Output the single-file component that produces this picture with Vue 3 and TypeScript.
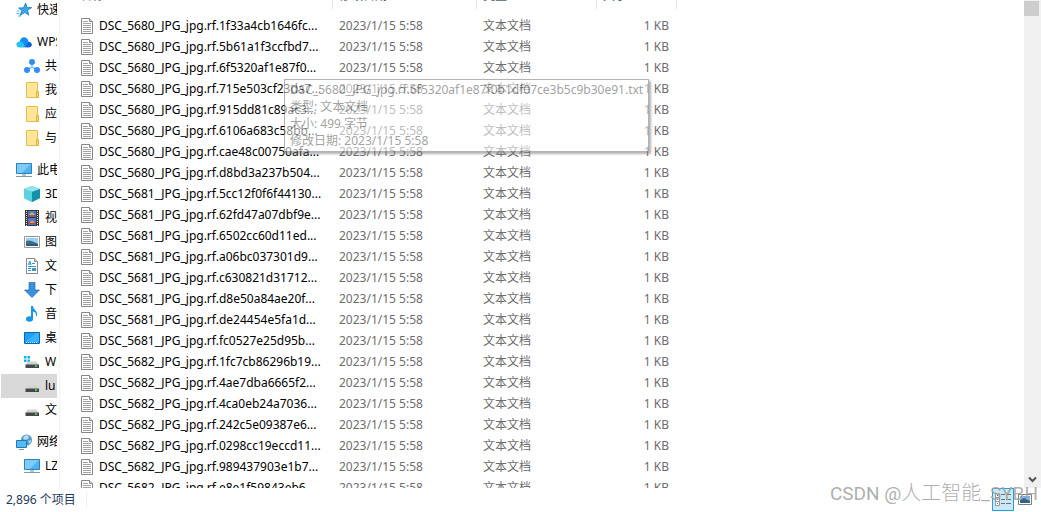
<script setup lang="ts">
type IconName =
  | 'star' | 'cloud' | 'share' | 'folder' | 'pc' | 'cube' | 'film' | 'photo' | 'doc'
  | 'down' | 'music' | 'desktop' | 'windrive' | 'drive' | 'network' | 'monitor'

interface NavItem {
  label: string
  icon: IconName
  child?: boolean
  selected?: boolean
}

const groups: NavItem[][] = [
  [{ label: '快速访问', icon: 'star' }],
  [
    { label: 'WPS云盘', icon: 'cloud' },
    { label: '共享', icon: 'share', child: true },
    { label: '我的', icon: 'folder', child: true },
    { label: '应用', icon: 'folder', child: true },
    { label: '与我', icon: 'folder', child: true },
  ],
  [
    { label: '此电脑', icon: 'pc' },
    { label: '3D 对象', icon: 'cube', child: true },
    { label: '视频', icon: 'film', child: true },
    { label: '图片', icon: 'photo', child: true },
    { label: '文档', icon: 'doc', child: true },
    { label: '下载', icon: 'down', child: true },
    { label: '音乐', icon: 'music', child: true },
    { label: '桌面', icon: 'desktop', child: true },
    { label: 'Windows', icon: 'windrive', child: true },
    { label: 'lu', icon: 'drive', child: true, selected: true },
    { label: '文件', icon: 'drive', child: true },
  ],
  [
    { label: '网络', icon: 'network' },
    { label: 'LZ', icon: 'monitor', child: true },
  ],
]

const files: string[] = [
  'DSC_5680_JPG_jpg.rf.1f33a4cb1646fc...',
  'DSC_5680_JPG_jpg.rf.5b61a1f3ccfbd7...',
  'DSC_5680_JPG_jpg.rf.6f5320af1e87f0...',
  'DSC_5680_JPG_jpg.rf.715e503cf23da7...',
  'DSC_5680_JPG_jpg.rf.915dd81c89ac3...',
  'DSC_5680_JPG_jpg.rf.6106a683c58bb...',
  'DSC_5680_JPG_jpg.rf.cae48c00750afa...',
  'DSC_5680_JPG_jpg.rf.d8bd3a237b504...',
  'DSC_5681_JPG_jpg.rf.5cc12f0f6f44130...',
  'DSC_5681_JPG_jpg.rf.62fd47a07dbf9e...',
  'DSC_5681_JPG_jpg.rf.6502cc60d11ed...',
  'DSC_5681_JPG_jpg.rf.a06bc037301d9...',
  'DSC_5681_JPG_jpg.rf.c630821d31712...',
  'DSC_5681_JPG_jpg.rf.d8e50a84ae20f...',
  'DSC_5681_JPG_jpg.rf.de24454e5fa1d...',
  'DSC_5681_JPG_jpg.rf.fc0527e25d95b...',
  'DSC_5682_JPG_jpg.rf.1fc7cb86296b19...',
  'DSC_5682_JPG_jpg.rf.4ae7dba6665f2...',
  'DSC_5682_JPG_jpg.rf.4ca0eb24a7036...',
  'DSC_5682_JPG_jpg.rf.242c5e09387e6...',
  'DSC_5682_JPG_jpg.rf.0298cc19eccd11...',
  'DSC_5682_JPG_jpg.rf.989437903e1b7...',
  'DSC_5682_JPG_jpg.rf.e8e1f59843eb6...',
]
</script>

<template>
  <div class="explorer">
    <div class="body">
      <nav class="sidebar">
        <ul v-for="(group, g) in groups" :key="g" class="group">
          <li v-for="item in group" :key="item.label">
            <a href="#" class="nav" :class="{ child: item.child, selected: item.selected }">
              <svg class="icon" viewBox="0 0 16 16" aria-hidden="true">
                <g v-if="item.icon === 'star'">
                  <path d="M9.700 1l1.200 4.400 4.800.2-4 2.700 1 4.900-3.800-2.800-5 3.200 1.900-5L2.500 6l4.900-.2z" fill="#3aa5ea" stroke="#1b7fc4" stroke-width=".8" />
                  <path d="M.5 9h3M.5 11.500h3M2 14h3" stroke="#5cb4ee" />
                </g>
                <g v-else-if="item.icon === 'cloud'">
                  <path d="M3.500 13.300C0 13.300.2 8.400 3.600 8 4.200 4.300 7 2.500 9.300 3.500c2 .8 3 2.500 3.300 4.200 4 .6 4.100 5.600.3 5.600z" fill="#168cf5" />
                  <path d="M4.500 13.300C-1 13.300-.8 7.800 3.600 7.500c3-.2 5.500 3 4.500 5.800z" fill="#27c4ee" />
                  <path d="M8 13.300c3 0 2.500-5.600 6-5.100 2.800 1.400 2 5.100-1.400 5.100z" fill="#1262dc" />
                </g>
                <g v-else-if="item.icon === 'share'">
                  <path d="M8 4v5L3 12M8 9l5 3" stroke="#8cc4ff" stroke-width="1.500" fill="none" />
                  <circle cx="8" cy="4" r="3" fill="#2f8ef5" />
                  <circle cx="3" cy="12" r="3" fill="#2f8ef5" />
                  <circle cx="13" cy="12" r="3" fill="#2f8ef5" />
                </g>
                <g v-else-if="item.icon === 'folder'">
                  <path d="M2.500.5h11v15h-11z" fill="#ffe596" stroke="#e5bd4c" />
                  <path d="M12.500 9.500h2v6h-2z" fill="#fbd66c" stroke="#dfb13c" />
                </g>
                <g v-else-if="item.icon === 'pc' || item.icon === 'monitor'">
                  <path d="M.5 1.500h15v10H.5z" fill="#4db3f5" stroke="#2b82bb" />
                  <path d="M1 2h14L6 11H1z" fill="#7ccbfa" />
                  <path d="M6 12h4v2H6z" fill="#b5c8d4" />
                  <path d="M0 14.500h16" stroke="#7d9cb0" />
                </g>
                <g v-else-if="item.icon === 'cube'">
                  <path d="M8 0l8 3v9l-8 4-8-4V3z" fill="#33b6cc" />
                  <path d="M8 0l8 3-8 3-8-3z" fill="#92e5ef" />
                  <path d="M8 6l8-3v9l-8 4z" fill="#1590a9" />
                  <path d="M0 3l8 3v10l-8-4z" fill="#5bd2e0" />
                </g>
                <g v-else-if="item.icon === 'film'">
                  <path d="M1 0h14v16H1z" fill="#37383b" />
                  <path d="M4 1h8v6H4zM4 8h8v7H4z" fill="#4a77d0" />
                  <path d="M5 5l3-3 3 3z" fill="#e8b32c" />
                  <path d="M5 14l3-4 4 4z" fill="#e6a02a" />
                  <path d="M4 6h8M4 13.500h8" stroke="#c23b42" />
                  <path d="M2.500 1v15M13.500 1v15" stroke="#e4e4e4" stroke-dasharray="1 1" />
                </g>
                <g v-else-if="item.icon === 'photo'">
                  <path d="M.5 2.500h15v11H.5z" fill="#fff" stroke="#979797" />
                  <path d="M2 4h12v8H2z" fill="#9bd0f2" />
                  <path d="M2 7q4-2 12 3v2H2z" fill="#416d82" />
                  <path d="M2 10h12v2H2z" fill="#2d5689" />
                </g>
                <g v-else-if="item.icon === 'doc'">
                  <path d="M2.500.5h8l3 3v12h-11z" fill="#fff" stroke="#8a8a8a" />
                  <path d="M10.500.5v3h3" fill="#ddd" stroke="#8a8a8a" />
                  <path d="M4 7l2-4 1 4M5 6h2M8 5.500h3M4 8.500h8M4 10.500h3M4 12.500h3" stroke="#2695da" fill="none" />
                  <path d="M8 10h4v3H8z" fill="#4f8fb5" />
                </g>
                <path v-else-if="item.icon === 'down'" d="M5 .5h6V8h4.500L8 15.500.5 8H5z" fill="#3890df" stroke="#226fb8" stroke-width=".7" />
                <g v-else-if="item.icon === 'music'">
                  <ellipse cx="5.500" cy="13" rx="3.500" ry="2.700" fill="#1597e8" />
                  <path d="M7 0h2c0 4 5 4 4 10h-1c0-3-1-4-3-4.500V13H7z" fill="#1597e8" />
                </g>
                <g v-else-if="item.icon === 'desktop'">
                  <path d="M.5 2.500h15v11H.5z" fill="#1ba0f4" stroke="#0868b1" />
                  <path d="M1 12L12 3h3v9z" fill="#37b2fb" />
                  <path d="M2 12.500h12" stroke="#bce5ff" stroke-dasharray="1 1" />
                </g>
                <g v-else-if="item.icon === 'windrive' || item.icon === 'drive'">
                  <path v-if="item.icon === 'windrive'" d="M0 2h2.500v2.500H0zM3.500 2H6v2.500H3.500zM0 5.500h2.500V8H0zM3.500 5.500H6V8H3.500z" fill="#09b0ef" />
                  <path d="M3.500 7.500h9L15 11H1.500z" fill="#d2d3d4" />
                  <path d="M1.500 10.500H15V14H1.500z" fill="#46484a" />
                  <path d="M11 12h2" stroke="#3cec70" stroke-width="1.500" />
                </g>
                <g v-else>
                  <circle cx="10.500" cy="6" r="5.500" fill="#4e9ac9" />
                  <path d="M8 2l4-1 1 3-3 2-3-1zM12 7l3-1-1 4z" fill="#b9dcec" />
                  <path d="M.5 6.500h10v7H.5z" fill="#55bbf7" stroke="#2479b3" />
                  <path d="M3 15.500h5" stroke="#7293a8" />
                </g>
              </svg>
              <span>{{ item.label }}</span>
            </a>
          </li>
        </ul>
      </nav>

      <main class="list">
        <table>
          <thead>
            <tr>
              <th class="c-name"><span>名称</span></th>
              <th class="c-date"><span>修改日期</span></th>
              <th class="c-type"><span>类型</span></th>
              <th class="c-size"><span>大小</span></th>
            </tr>
          </thead>
          <tbody>
            <tr v-for="name in files" :key="name">
              <td class="name">
                <div class="file">
                  <svg class="file-icon" viewBox="0 0 12 16" aria-hidden="true">
                    <path d="M.5.5h8l3 3v12H.5z" fill="#fff" stroke="#868686" />
                    <path d="M8.500.5v3h3" fill="#e4e4e4" stroke="#868686" />
                    <path d="M2 3.500h5M2 5.500h8M2 7.500h8M2 9.500h8M2 11.500h8M2 13.500h8" stroke="#a2a2a2" />
                  </svg>
                  <span>{{ name }}</span>
                </div>
              </td>
              <td>2023/1/15 5:58</td>
              <td>文本文档</td>
              <td class="size">1 KB</td>
            </tr>
          </tbody>
        </table>
        <div class="tooltip" role="tooltip">
          <div>DSC_5680_JPG_jpg.rf.6f5320af1e87f0b1df07ce3b5c9b30e91.txt</div>
          <div>类型: 文本文档</div>
          <div>大小: 499 字节</div>
          <div>修改日期: 2023/1/15 5:58</div>
        </div>
      </main>

      <div class="scrollbar">
        <div class="thumb"></div>
        <button type="button" class="arrow" aria-label="向下滚动">
          <svg viewBox="0 0 9 7" aria-hidden="true"><path d="M1 1.500l3.500 3.500L8 1.500" fill="none" stroke="#505050" stroke-width="2" /></svg>
        </button>
      </div>
    </div>

    <footer class="status">
      <span class="count">2,896 个项目</span>
      <div class="views">
        <button type="button" class="view on" aria-label="详细信息">
          <svg viewBox="0 0 18 14" aria-hidden="true">
            <path d="M1.500.5h4v12h-4z" fill="#fff" stroke="#8c9aa3" />
            <path d="M1.500 4.500h4M1.500 8.500h4" stroke="#8c9aa3" />
            <path d="M3 2.500h1" stroke="#3675b5" /><path d="M3 6.500h1" stroke="#3a9648" /><path d="M3 10.500h1" stroke="#d23c3c" />
            <path d="M7 1.500h4M12 1.500h5M7 6.500h4M12 6.500h5M7 10.500h4M12 10.500h5" stroke="#61737e" />
          </svg>
        </button>
        <button type="button" class="view" aria-label="大图标">
          <svg viewBox="0 0 18 14" aria-hidden="true">
            <path d="M2.500 1.500h13v10h-13z" fill="#fff" stroke="#7d7d7d" />
            <path d="M4 3h10v7H4z" fill="#72b5ef" />
            <path d="M4 7l4-2 6 3v2H4z" fill="#316389" />
          </svg>
        </button>
      </div>
      <div class="watermark">CSDN @<span class="han">人工智能</span>_SYBH</div>
    </footer>
  </div>
</template>

<style>
body {
  margin: 0;
  background: #fff;
}
</style>

<style scoped>
.explorer {
  display: flex;
  flex-direction: column;
  height: 100vh;
  overflow: hidden;
  background: #fff;
  color: #000;
  font: 12px/16px "Noto Sans", "Noto Sans CJK SC", sans-serif;
}
.body {
  display: flex;
  flex: 1;
  min-height: 0;
}
.sidebar {
  box-sizing: border-box;
  width: 60px;
  padding-right: 2px;
  border-right: 1px solid #f3f3f3;
  overflow: hidden;
}
.group {
  list-style: none;
  margin: 0 0 8px;
  padding: 0;
}
.group:first-child {
  margin-top: -2px;
}
.nav {
  display: flex;
  align-items: center;
  gap: 5px;
  height: 24px;
  margin-left: 1px;
  padding-left: 15px;
  overflow: hidden;
  color: #000;
  text-decoration: none;
  white-space: nowrap;
}
.nav.child {
  padding-left: 23px;
}
.nav.selected {
  background: #d9d9d9;
}
.icon {
  flex: none;
  width: 16px;
  height: 16px;
}
.list {
  position: relative;
  flex: 1;
  min-width: 0;
  padding-left: 14px;
  overflow: hidden;
}
table {
  margin-top: -17px;
  border-collapse: collapse;
  table-layout: fixed;
  width: 603px;
}
th {
  height: 32px;
  padding: 0;
  vertical-align: top;
  color: #4c607a;
  font-weight: 400;
  text-align: left;
}
th span {
  display: block;
  box-sizing: border-box;
  height: 26px;
  padding-left: 6px;
  border-right: 1px solid #e2e2e2;
  line-height: 26px;
}
.c-name {
  width: 259px;
}
.c-date {
  width: 144px;
}
.c-type {
  width: 120px;
}
.c-size {
  width: 80px;
}
td {
  height: 21px;
  padding: 0 6px;
  color: #6d6d6d;
  white-space: nowrap;
}
td.name {
  padding: 0 0 0 7px;
  color: #000;
}
td.size {
  padding-right: 8px;
  text-align: right;
}
.file {
  display: flex;
  align-items: center;
  gap: 6px;
}
.file-icon {
  flex: none;
  width: 12px;
  height: 16px;
}
.tooltip {
  position: absolute;
  left: 224px;
  top: 79px;
  padding: 1px 5px 2px;
  border: 1px solid #767676;
  background: #fff;
  box-shadow: 2px 2px 2px #777;
  color: #575757;
  line-height: 17px;
  white-space: nowrap;
  opacity: 0.55;
}
.scrollbar {
  display: flex;
  flex-direction: column;
  justify-content: space-between;
  width: 17px;
  background: #f0f0f0;
}
.thumb {
  width: 15px;
  height: 15px;
  margin-top: 1px;
  background: #cdcdcd;
}
.arrow {
  display: flex;
  align-items: center;
  justify-content: center;
  height: 17px;
  padding: 0;
  border: 0;
  background: none;
}
.arrow svg {
  width: 9px;
  height: 7px;
}
.status {
  position: relative;
  display: flex;
  align-items: center;
  justify-content: space-between;
  height: 24px;
  padding: 0 5px 0 6px;
  color: #1e395b;
}
.count {
  padding-right: 10px;
  border-right: 1px solid #f0f0f0;
}
.views {
  display: flex;
  align-self: flex-start;
}
.view {
  display: flex;
  align-items: center;
  justify-content: center;
  box-sizing: border-box;
  width: 22px;
  height: 23px;
  padding: 0;
  border: 0;
  background: none;
}
.view.on {
  border: 1px solid #26a0da;
  background: #cce8f6;
}
.view svg {
  width: 18px;
  height: 14px;
}
.watermark {
  position: absolute;
  right: 3px;
  bottom: 4px;
  color: rgba(160, 160, 160, 0.85);
  font: 19px/28px Roboto, "Noto Sans CJK SC", sans-serif;
  white-space: nowrap;
}
.han {
  font-size: 20px;
  font-weight: 300;
}
</style>
